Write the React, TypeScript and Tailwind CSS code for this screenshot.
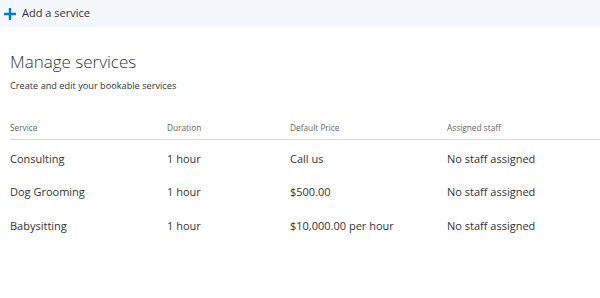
const services = [
  { name: "Consulting", duration: "1 hour", price: "Call us", staff: "No staff assigned" },
  { name: "Dog Grooming", duration: "1 hour", price: "$500.00", staff: "No staff assigned" },
  { name: "Babysitting", duration: "1 hour", price: "$10,000.00 per hour", staff: "No staff assigned" },
]

export default function App() {
  return (
    <div className="w-[600px] h-[298px] bg-white text-[#333] font-['Open_Sans','Noto_Sans',sans-serif] overflow-hidden">
      {/* Command bar */}
      <div className="h-[27px] bg-[#f4f8fc] flex items-center pl-[4px]">
        <svg width="12" height="12" viewBox="0 0 12 12" className="mr-[6px]">
          <path d="M6 0v12M0 6h12" stroke="#0078d4" strokeWidth="2.4" />
        </svg>
        <span className="text-[11px] leading-[14px] text-[#333] -mt-[2px]">Add a service</span>
      </div>

      <div className="pl-[10px]">
        <h1 className="mt-[23px] text-[17px] leading-[24px] font-light text-[#333]">Manage services</h1>
        <p className="mt-[5px] text-[9.2px] leading-[14px] text-[#333]">Create and edit your bookable services</p>

        {/* Table header */}
        <div className="mt-[29px] grid grid-cols-[157px_123px_157px_1fr] text-[8.3px] leading-[12px] text-[#666] border-b border-[#ddd] pb-[5px]">
          <span>Service</span>
          <span>Duration</span>
          <span>Default Price</span>
          <span>Assigned staff</span>
        </div>

        <div className="mt-[2px]">
          {services.map((s) => (
            <div key={s.name} className="grid grid-cols-[157px_123px_157px_1fr] h-[33.5px] items-center text-[11px] leading-[14px] text-[#333]">
              <span>{s.name}</span>
              <span>{s.duration}</span>
              <span>{s.price}</span>
              <span>{s.staff}</span>
            </div>
          ))}
        </div>
      </div>
    </div>
  )
}
